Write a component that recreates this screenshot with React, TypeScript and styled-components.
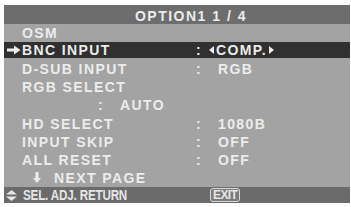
import React from "react";
import styled, { createGlobalStyle } from "styled-components";

const Global = createGlobalStyle`
  html, body { margin: 0; padding: 0; background: #ffffff; }
  body { width: 351px; height: 207px; overflow: hidden; }
`;

const Screen = styled.div`
  width: 351px;
  height: 207px;
  padding: 5px 1px 4px 4px;
  box-sizing: border-box;
  background: #fdfdfd;
`;

const Panel = styled.div`
  display: grid;
  grid-template-rows: 19px 1fr 16px;
  height: 100%;
  background: #a3a3a3;
  font-family: "Liberation Sans", Arial, sans-serif;
  font-weight: bold;
  color: #ececec;
`;

const TitleBar = styled.div`
  display: flex;
  align-items: center;
  justify-content: center;
  padding: 2px 0 0 28px;
  background: #6d6d6d;
  font-size: 14px;
  letter-spacing: 1.5px;
`;

const Body = styled.div`
  display: grid;
  grid-template-rows: repeat(9, 1fr);
`;

const Row = styled.div<{ $selected?: boolean }>`
  display: grid;
  grid-template-columns: 18px 174px 13px 1fr;
  align-items: center;
  font-size: 14px;
  letter-spacing: 1.4px;
  background: ${(p) => (p.$selected ? "#303030" : "transparent")};
  margin: ${(p) => (p.$selected ? "0 0 2px" : "0")};
`;

const Pointer = styled.span`
  display: flex;
  align-items: center;
  justify-content: center;
  padding-left: 1px;
`;

const Label = styled.span<{ $indent?: number }>`
  padding-left: ${(p) => p.$indent ?? 0}px;
  white-space: nowrap;
  display: flex;
  align-items: center;
  gap: 13px;
`;

const Colon = styled.span``;

const Value = styled.span<{ $arrows?: boolean }>`
  display: flex;
  align-items: center;
  gap: 2px;
  padding-left: ${(p) => (p.$arrows ? 0 : 9)}px;
  white-space: nowrap;
`;

const SubRow = styled.div`
  display: flex;
  align-items: center;
  padding-left: 94px;
  font-size: 14px;
  letter-spacing: 1.4px;
  gap: 16px;
`;

const Footer = styled.div`
  display: flex;
  align-items: center;
  background: #6b6b6b;
  color: #e6e6e6;
  padding-left: 2px;
`;

const FooterText = styled.span`
  display: flex;
  align-items: center;
  gap: 6px;
  width: 204px;
`;

const Condensed = styled.span`
  display: inline-block;
  font-size: 14px;
  font-weight: bold;
  letter-spacing: -0.2px;
  transform: scaleX(0.83);
  transform-origin: left center;
  white-space: nowrap;
`;

const ExitKey = styled.span`
  font-size: 12px;
  font-weight: bold;
  border: 1px solid #d8d8d8;
  border-radius: 3px;
  padding: 0 2px;
  line-height: 12px;
  background: #7c7c7c;
  letter-spacing: -0.6px;
`;

const RightArrow = () => (
  <svg width="14" height="10" viewBox="0 0 14 10">
    <path d="M0 3.5H7V0.5L13.5 5L7 9.5V6.5H0Z" fill="#ececec" />
  </svg>
);

const Tri = ({ dir }: { dir: "l" | "r" }) => (
  <svg width="5" height="8" viewBox="0 0 5 8">
    <path d={dir === "l" ? "M5 0V8L0 4Z" : "M0 0V8L5 4Z"} fill="#ececec" />
  </svg>
);

const DownArrow = () => (
  <svg width="8" height="11" viewBox="0 0 8 11">
    <path d="M2.5 0H5.5V6H8L4 11L0 6H2.5Z" fill="#ececec" />
  </svg>
);

const UpDown = () => (
  <svg width="11" height="11" viewBox="0 0 11 11">
    <path d="M5.5 0L11 4.5H0Z M0 6.5H11L5.5 11Z" fill="#e6e6e6" />
  </svg>
);

type Item = { label: string; value: string };

const items: Item[] = [{ label: "D-SUB INPUT", value: "RGB" }];

const lower: Item[] = [
  { label: "HD SELECT", value: "1080B" },
  { label: "INPUT SKIP", value: "OFF" },
  { label: "ALL RESET", value: "OFF" },
];

const SettingRow = ({ label, value }: Item) => (
  <Row>
    <Pointer />
    <Label>{label}</Label>
    <Colon>:</Colon>
    <Value>{value}</Value>
  </Row>
);

export default function App() {
  return (
    <>
      <Global />
      <Screen>
        <Panel>
          <TitleBar>OPTION1 1 / 4</TitleBar>
          <Body>
            <Row>
              <Pointer />
              <Label>OSM</Label>
            </Row>
            <Row $selected>
              <Pointer>
                <RightArrow />
              </Pointer>
              <Label>BNC INPUT</Label>
              <Colon>:</Colon>
              <Value $arrows>
                <Tri dir="l" />
                COMP.
                <Tri dir="r" />
              </Value>
            </Row>
            {items.map((it) => (
              <SettingRow key={it.label} {...it} />
            ))}
            <Row>
              <Pointer />
              <Label>RGB SELECT</Label>
            </Row>
            <SubRow>
              <span>:</span>
              <span>AUTO</span>
            </SubRow>
            {lower.map((it) => (
              <SettingRow key={it.label} {...it} />
            ))}
            <Row>
              <Pointer />
              <Label $indent={11}>
                <DownArrow />
                NEXT PAGE
              </Label>
            </Row>
          </Body>
          <Footer>
            <FooterText>
              <UpDown />
              <Condensed>SEL. ADJ. RETURN</Condensed>
            </FooterText>
            <ExitKey>EXIT</ExitKey>
          </Footer>
        </Panel>
      </Screen>
    </>
  );
}
